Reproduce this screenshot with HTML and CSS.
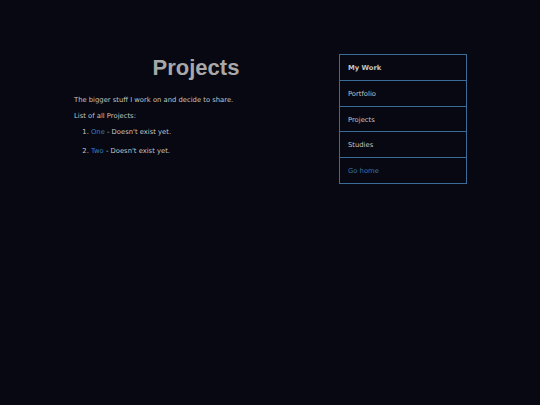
FILE: index.html
```html
<!DOCTYPE html>
<html lang="en">
<head>
<meta charset="utf-8">
<title>Projects</title>
<link rel="stylesheet" href="styles.css">
</head>
<body>
<div class="page">
  <main class="content">
    <h1 class="title">Projects</h1>
    <p class="intro">The bigger stuff I work on and decide to share.</p>
    <p class="intro second">List of all Projects:</p>
    <ol class="projects">
      <li><a href="#" class="link">One</a> - Doesn't exist yet.</li>
      <li><a href="#" class="link">Two</a> - Doesn't exist yet.</li>
    </ol>
  </main>
  <nav class="menu">
    <div class="menu-item menu-head">My Work</div>
    <a class="menu-item" href="#">Portfolio</a>
    <a class="menu-item" href="#">Projects</a>
    <a class="menu-item" href="#">Studies</a>
    <a class="menu-item menu-home" href="#">Go home</a>
  </nav>
</div>
</body>
</html>
```

FILE: styles.css
```css
html, body {
  margin: 0;
  padding: 0;
  background: #070811;
  height: 100%;
}
body {
  font-family: "DejaVu Sans", Verdana, sans-serif;
  font-size: 6.8px;
  color: #c4c4c4;
}
.page {
  display: flex;
  align-items: flex-start;
  padding-top: 54px;
  padding-left: 74px;
  gap: 21px;
}
.content {
  width: 244px;
  padding-top: 1px;
}
.title {
  margin: 0;
  text-align: center;
  font-family: "Liberation Sans", Arial, sans-serif;
  font-weight: bold;
  font-size: 22px;
  line-height: 25px;
  color: #a8a8a8;
}
.intro {
  margin: 15px 0 0;
  line-height: 10px;
}
.intro.second {
  margin-top: 6px;
}
.projects {
  margin: 6px 0 0;
  padding-left: 17px;
  line-height: 10px;
}
.projects li {
  margin-bottom: 9.4px;
}
.link {
  color: #3b7dbd;
  text-decoration: none;
}
.menu {
  width: 126px;
  display: flex;
  flex-direction: column;
  border: 1px solid #3a6c97;
}
.menu-item {
  display: block;
  height: 22.8px;
  line-height: 22.8px;
  padding: 2px 8px 0;
  color: #c4c4c4;
  text-decoration: none;
  border-top: 1px solid #3a6c97;
}
.menu-head {
  border-top: none;
  font-weight: bold;
}
.menu-home {
  color: #3b74a8;
}
```
